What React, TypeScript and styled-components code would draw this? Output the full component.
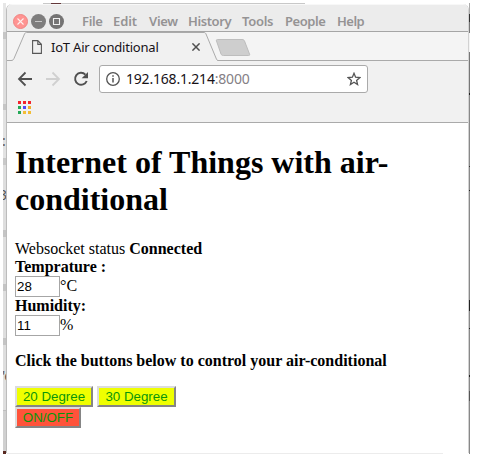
import React from "react";
import styled, { createGlobalStyle } from "styled-components";

const GlobalStyle = createGlobalStyle`
  body { margin: 0; background: #fff; }
  * { box-sizing: border-box; }
`;

const Desktop = styled.main`
  width: 478px;
  height: 461px;
  padding: 3px 0 0 3px;
  display: grid;
  grid-template-columns: 3px 463px 1px;
  grid-template-rows: 451px;
  overflow: hidden;
  position: relative;
`;

const TopEdge = styled.div`
  position: absolute;
  left: 43px;
  top: 3px;
  width: 262px;
  height: 1px;
  background: linear-gradient(90deg, #c8c8c8 8px, #64383a 8px 18px, #c8c8c8 18px);
`;

const BottomEdge = styled.div`
  position: absolute;
  left: 7px;
  top: 453px;
  width: 436px;
  height: 1px;
  background: #ececec;
`;

const LeftBackdrop = styled.aside`
  background: linear-gradient(#e6e6e6 29px, #c6c6c6 29px 36px, #dedede 36px 101px, #c6c6c6 101px 107px,
    #e2e2e2 107px 155px, #c8c8c8 155px 162px, #dedede 162px 227px, #c4c4c4 227px 234px,
    #dedede 234px 281px, #c4c4c4 281px 288px, #dedede 288px 335px, #c4c4c4 335px 342px,
    #dedede 342px 407px, #bebebe 407px 408px, #d0d0d0 408px 448px, #582820 448px);
  position: relative;
  overflow: hidden;
`;

const Sliver = styled.span<{ $top: number; $left: number }>`
  position: absolute;
  top: ${(p) => p.$top}px;
  left: ${(p) => p.$left}px;
  font: 14px/14px "Noto Sans", sans-serif;
  color: #555;
`;

const RightBackdrop = styled.aside`
  background: linear-gradient(#aaa 11px, #333 11px 19px, #777 19px 30px, #f4f4f4 30px 49px,
    #777 49px 90px, #222 90px 92px, #888 92px 163px, #333 163px 164px, #888 164px 187px,
    #222 187px 188px, #888 188px 297px, #222 297px 308px, #888 308px 325px, #222 325px 326px,
    #888 326px 372px, #222 372px 374px, #888 374px 388px, #555 388px 398px, #888 398px);
`;

const Window = styled.section`
  margin-top: 1px;
  height: 449px;
  border-left: 1px solid #bcbcbc;
  border-right: 1px solid #d2d2d2;
  border-radius: 6px 6px 0 0;
  background: #fff;
  overflow: hidden;
`;

const TitleBar = styled.header`
  height: 28px;
  display: flex;
  align-items: center;
  padding: 6px 0 0 6px;
  background: #ececec;
  border-top: 1px solid #f8f8f8;
  border-bottom: 1px solid #a5a5a5;
`;

const WindowControls = styled.div`
  display: flex;
  gap: 3px;
  width: 69px;
  svg { display: block; }
`;

const MenuItem = styled.span<{ $width: number; $spacing?: number }>`
  width: ${(p) => p.$width}px;
  flex: none;
  white-space: nowrap;
  font: 600 13px/18px "Noto Sans", sans-serif;
  letter-spacing: ${(p) => p.$spacing ?? 0}px;
  color: #959394;
`;

const TabStrip = styled.div`
  height: 29px;
  background: #f4f4f4;
  border-bottom: 1px solid #aaa;
`;

const Tab = styled.div`
  height: 29px;
  position: relative;
  display: flex;
  align-items: center;
  padding: 0 0 0 25px;
`;

const TabShape = styled.svg`
  position: absolute;
  left: 0;
  top: 0;
`;

const TabIcon = styled.svg`
  position: relative;
  flex: none;
`;

const TabTitle = styled.span`
  position: relative;
  width: 141px;
  margin-left: 9px;
  white-space: nowrap;
  font: 13px/18px "Noto Sans", sans-serif;
  letter-spacing: -0.2px;
  color: #171217;
`;

const Toolbar = styled.nav`
  height: 36px;
  padding: 4px 0 4px 10px;
  display: flex;
  align-items: center;
  background: #f1f1f1;
`;

const NavIcons = styled.div`
  display: flex;
  gap: 12px;
  width: 82px;
  svg { display: block; }
`;

const AddressBar = styled.div`
  width: 269px;
  height: 28px;
  border: 1px solid #aaa;
  border-radius: 3px;
  background: #fff;
  display: flex;
  align-items: center;
  padding: 0 6px;
`;

const Address = styled.span`
  flex: 1;
  margin-left: 6px;
  white-space: nowrap;
  font: 14px/20px "Noto Sans", sans-serif;
  letter-spacing: -0.2px;
  color: #171217;
`;

const Port = styled.span`
  color: #858085;
`;

const BookmarkBar = styled.div`
  height: 26px;
  padding: 4px 0 0 11px;
  background: #f1f1f1;
  border-bottom: 1px solid #aaa;
  svg { display: block; }
`;

const Page = styled.article`
  padding: 21px 8px 0;
  font: 16px/18px "Liberation Serif", serif;
  color: #000;
`;

const Heading = styled.h1`
  margin: 0 0 22px;
  font-size: 32px;
  line-height: 37px;
  font-weight: bold;
`;

const Line = styled.div`
  height: 18px;
`;

const Reading = styled.div`
  height: 21px;
  display: flex;
  align-items: flex-start;
  line-height: 19px;
`;

const ValueInput = styled.input`
  width: 45px;
  height: 21px;
  padding: 1px;
  margin: 0;
  border: 1px solid #a6a6a6;
  border-radius: 0;
  background: #fff;
  color: #000;
  font: 13.333px "Liberation Sans", sans-serif;
`;

const Instruction = styled.h4`
  margin: 16px 0 16px;
  font-size: 16px;
  line-height: 18px;
`;

const ButtonRow = styled.div`
  display: flex;
  gap: 4px;
`;

const ControlButton = styled.button<{ $width: number; $danger?: boolean }>`
  width: ${(p) => p.$width}px;
  height: 21px;
  padding: 0;
  border: 2px solid;
  border-color: #dcdcdc #858585 #858585 #dcdcdc;
  border-radius: 0;
  background: ${(p) => (p.$danger ? "#ff533a" : "#efff00")};
  color: #0a960a;
  font: 13.333px/15px "Liberation Sans", sans-serif;
  white-space: nowrap;
`;

const menus = [
  { label: "File", width: 31, spacing: -0.35 },
  { label: "Edit", width: 36, spacing: -0.1 },
  { label: "View", width: 39, spacing: -0.3 },
  { label: "History", width: 54, spacing: -0.4 },
  { label: "Tools", width: 43, spacing: -0.3 },
  { label: "People", width: 52, spacing: -0.45 },
  { label: "Help", width: 30, spacing: -0.5 },
];

const appColors = [
  "#f3232c", "#f3232c", "#f3232c",
  "#24a957", "#5548f5", "#efae2e",
  "#24a957", "#f3bd36", "#f3bd36",
];

export default function App() {
  return (
    <>
      <GlobalStyle />
      <Desktop>
        <LeftBackdrop>
          <Sliver $top={131} $left={-1}>:</Sliver>
          <Sliver $top={185} $left={-4}>3</Sliver>
          <Sliver $top={366} $left={-1}>'e</Sliver>
        </LeftBackdrop>
        <Window>
          <TitleBar>
            <WindowControls>
              <svg width="15" height="15" viewBox="0 0 15 15" fill="none">
                <circle cx="7.5" cy="7.5" r="7" fill="#ff9492" stroke="#ee8583" />
                <path d="m4.5 4.5 6 6m0-6-6 6" stroke="#fff0ee" strokeWidth="1.1" />
              </svg>
              <svg width="15" height="15" viewBox="0 0 15 15" fill="none">
                <circle cx="7.5" cy="7.5" r="7.5" fill="#7e7d7d" />
                <path d="M4 7.5h7" stroke="#c8c8c8" strokeWidth="1.2" />
              </svg>
              <svg width="15" height="15" viewBox="0 0 15 15" fill="none">
                <circle cx="7.5" cy="7.5" r="7.5" fill="#747373" />
                <path d="M4.5 4.5h6v6h-6z" stroke="#f0f0f0" strokeWidth="1.1" />
              </svg>
            </WindowControls>
            {menus.map((m) => (
              <MenuItem key={m.label} $width={m.width} $spacing={m.spacing}>{m.label}</MenuItem>
            ))}
          </TitleBar>
          <TabStrip>
            <Tab>
              <TabShape width="461" height="29" fill="none">
                <path d="M0 28.5h4c2 0 2.5-1 3-2L17.5 2c.5-1 1-1.5 2-1.5H197c1 0 1.5.5 2 1.5l10.5 24.5 1 2V29H0Z" fill="#f1f1f1" />
                <path d="M0 28.5h4c2 0 2.5-1 3-2L17.5 2c.5-1 1-1.5 2-1.5H197c1 0 1.5.5 2 1.5l10 24c.5 1.5 1 2.5 2.5 2.5H461" stroke="#aaa" />
                <path d="M210.5 7.5H235c1.5 0 2 .5 2.5 1.5l5 13c.5 1 0 1.5-1 1.5h-25c-1.5 0-2-.5-2.5-1.5L209.5 9c-.3-1 0-1.5 1-1.5Z" fill="#cecece" stroke="#bdbdbd" />
              </TabShape>
              <TabIcon width="10" height="14" viewBox="0 0 10 14" fill="none" stroke="#575757" strokeWidth="1.1">
                <path d="M.6.6h5.2l3.6 3.7v9.1H.6zM5.8.6v3.8h3.6" />
              </TabIcon>
              <TabTitle>IoT Air conditional</TabTitle>
              <TabIcon width="8" height="8" viewBox="0 0 8 8" stroke="#505050" strokeWidth="1.5">
                <path d="m.4.4 7.2 7.2m0-7.2L.4 7.6" />
              </TabIcon>
            </Tab>
          </TabStrip>
          <Toolbar>
            <NavIcons>
              <svg width="16" height="16" viewBox="0 0 16 16" fill="none" stroke="#505050" strokeWidth="1.8">
                <path d="M15 8H2m6.5-6.5L2 8l6.5 6.5" />
              </svg>
              <svg width="16" height="16" viewBox="0 0 16 16" fill="none" stroke="#d0d0d0" strokeWidth="1.8">
                <path d="M1 8h13M7.5 1.5 14 8l-6.5 6.5" />
              </svg>
              <svg width="16" height="16" viewBox="0 0 16 16" fill="none">
                <path d="M12.4 3.6A6 6 0 1 0 13.7 10" stroke="#505050" strokeWidth="1.9" />
                <path d="M15 1v6.3H8.7z" fill="#505050" />
              </svg>
            </NavIcons>
            <AddressBar>
              <svg width="14" height="14" viewBox="0 0 14 14" fill="none" stroke="#535353" strokeWidth="1.3">
                <circle cx="7" cy="7" r="6.3" />
                <path d="M7 6v4.5M7 3.2v1.6" strokeWidth="1.5" />
              </svg>
              <Address>192.168.1.214<Port>:8000</Port></Address>
              <svg width="14" height="14" viewBox="0 0 14 14" fill="none" stroke="#555" strokeWidth="1.3">
                <path d="m7 1.3 1.6 3.9 4.2.4-3.2 2.8 1 4.1L7 10.3l-3.6 2.2 1-4.1-3.2-2.8 4.2-.4z" />
              </svg>
            </AddressBar>
          </Toolbar>
          <BookmarkBar>
            <svg width="13" height="13" viewBox="0 0 13 13">
              {appColors.map((fill, i) => (
                <rect key={i} x={(i % 3) * 5} y={Math.floor(i / 3) * 5} width="3" height="3" fill={fill} />
              ))}
            </svg>
          </BookmarkBar>
          <Page>
            <Heading>Internet of Things with air-conditional</Heading>
            <Line>Websocket status <b>Connected</b></Line>
            <Line><b>Temprature :</b></Line>
            <Reading><ValueInput defaultValue="28" aria-label="Temprature" />°C</Reading>
            <Line><b>Humidity:</b></Line>
            <Reading><ValueInput defaultValue="11" aria-label="Humidity" />%</Reading>
            <Instruction>Click the buttons below to control your air-conditional</Instruction>
            <ButtonRow>
              <ControlButton $width={78}>20 Degree</ControlButton>
              <ControlButton $width={79}>30 Degree</ControlButton>
            </ButtonRow>
            <ButtonRow>
              <ControlButton $width={66} $danger>ON/OFF</ControlButton>
            </ButtonRow>
          </Page>
        </Window>
        <RightBackdrop />
        <TopEdge />
        <BottomEdge />
      </Desktop>
    </>
  );
}
